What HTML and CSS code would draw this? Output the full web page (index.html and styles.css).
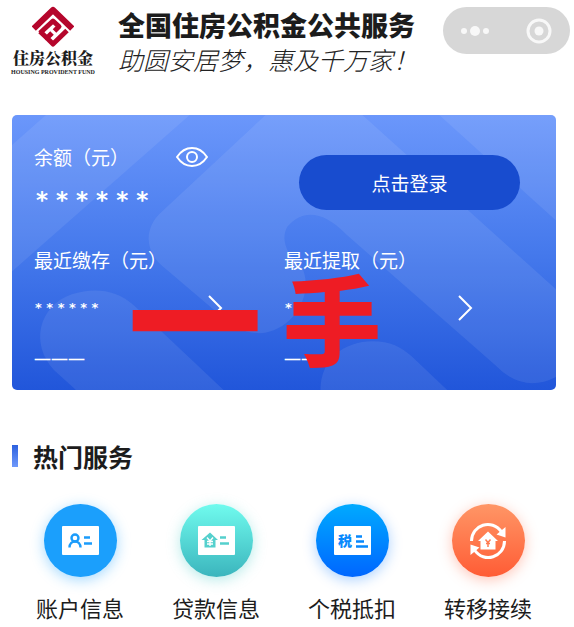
FILE: index.html
```html
<!DOCTYPE html>
<html lang="zh-CN">
<head>
<meta charset="utf-8">
<meta name="viewport" content="width=device-width, initial-scale=1">
<title>全国住房公积金公共服务</title>
<link rel="stylesheet" href="styles.css">
</head>
<body>
<header class="header">
  <div class="brand">
    <svg class="brand-mark" viewBox="0 0 42 42" aria-hidden="true">
      <g fill="none" stroke="#b5062c" stroke-width="5" stroke-linejoin="round">
        <path d="M1.800 22.500 21 4 40.200 22.500" stroke-width="6"/>
        <path d="M8 27 21 15 27 20.500 22.500 25"/>
        <path d="M8 25.500 15.500 32.500"/>
        <path d="M35 24.500 21 38 15 32 20 27"/>
      </g>
    </svg>
    <strong class="brand-name">住房公积金</strong>
    <span class="brand-latin">HOUSING PROVIDENT FUND</span>
  </div>
  <div class="titles">
    <h1 class="title">全国住房公积金公共服务</h1>
    <p class="slogan">助圆安居梦，惠及千万家！</p>
  </div>
  <div class="capsule">
    <button class="capsule-button" type="button" aria-label="更多">
      <svg width="28" height="12" viewBox="0 0 28 12" fill="#f8f8f8"><circle cx="3" cy="6" r="3"/><circle cx="14" cy="6" r="5"/><circle cx="25" cy="6" r="3"/></svg>
    </button>
    <button class="capsule-button" type="button" aria-label="关闭">
      <svg width="26" height="26" viewBox="0 0 26 26"><circle cx="13" cy="13" r="11" fill="none" stroke="#f8f8f8" stroke-width="3"/><circle cx="13" cy="13" r="4.500" fill="#f8f8f8"/></svg>
    </button>
  </div>
</header>

<main class="main">
  <section class="card">
    <svg class="card-pattern" viewBox="0 0 545 276" preserveAspectRatio="none" aria-hidden="true">
      <g fill="#fff" fill-opacity=".08">
        <path d="M34 0H178L0 157V30Z"/>
        <path d="M254 0H351L545 175V263Q512 280 484 251L335 120C310 94 290 96 276 112C270 122 272 138 290 152C304 178 282 217 249 219C233 219 222 213 211 203L150 151C132 135 133 112 150 97Z"/>
        <path d="M428 0H545V106Z"/>
        <path d="M64 276 42 256C18 230 26 192 60 180C82 173 104 175 122 191L212 276Z"/>
        <path d="M309 276C309 244 334 227 361 227C379 227 390 233 400 242L436 276Z"/>
      </g>
    </svg>
    <div class="balance">
      <div class="balance-head">
        <span class="label">余额（元）</span>
        <button class="eye" type="button" aria-label="显示余额">
          <svg width="32" height="20" viewBox="0 0 32 20" fill="none" stroke="#fff" stroke-width="2"><path d="M1 10C5 4 10 1 16 1S27 4 31 10C27 16 22 19 16 19S5 16 1 10Z"/><circle cx="16" cy="10" r="5"/></svg>
        </button>
      </div>
      <div class="amount">* * * * * *</div>
    </div>
    <div class="login-cell"><button class="login" type="button">点击登录</button></div>
    <a class="record" href="#deposit">
      <span class="label">最近缴存（元）</span>
      <span class="record-row"><span class="record-value">* * * * * *</span>
        <svg class="chevron" width="15" height="26" viewBox="0 0 15 26" fill="none" stroke="#fff" stroke-width="2"><path d="M1 1 13 13 1 25"/></svg></span>
      <span class="record-date">———</span>
    </a>
    <a class="record" href="#withdraw">
      <span class="label">最近提取（元）</span>
      <span class="record-row"><span class="record-value">* * * * * *</span>
        <svg class="chevron" width="15" height="26" viewBox="0 0 15 26" fill="none" stroke="#fff" stroke-width="2"><path d="M1 1 13 13 1 25"/></svg></span>
      <span class="record-date">———</span>
    </a>
    <div class="mark"><span class="mark-one">一</span><span class="mark-hand">手</span></div>
  </section>

  <section class="services">
    <h2 class="section-title">热门服务</h2>
    <nav class="service-grid">
      <a class="service" href="#account">
        <span class="disc disc-blue"><svg width="37" height="29" viewBox="0 0 37 29"><rect width="37" height="29" rx="1" fill="#fff"/><g fill="none" stroke="#1b9cfb" stroke-width="2.400"><circle cx="13" cy="12" r="3.500"/><path d="M7.500 21.500C7.500 17.500 10 15.500 13 15.500S18.500 17.500 18.500 21.500M22 11.500h6M22 17.500h8"/></g></svg></span>
        <span>账户信息</span>
      </a>
      <a class="service" href="#loan">
        <span class="disc disc-teal"><svg width="37" height="29" viewBox="0 0 37 29"><rect width="37" height="29" rx="1" fill="#fff"/><path d="M12 6.500 20 14H17.500V21.500H6.500V14H3.500Z" fill="#55d0cd"/><path d="M9 11.500 12 15 15 11.500M12 15V20M9 15.500H15M9 18H15" fill="none" stroke="#fff" stroke-width="1.400"/><path d="M22 11.500h6M22 17.500h9" stroke="#55d0cd" stroke-width="2.400"/></svg></span>
        <span>贷款信息</span>
      </a>
      <a class="service" href="#tax">
        <span class="disc disc-deep"><svg width="37" height="29" viewBox="0 0 37 29"><rect width="37" height="29" rx="1" fill="#fff"/><text class="tax-glyph" x="4" y="20">税</text><path d="M22 10.500h6M22 15.500h8M22 20.500h12" stroke="#0789fd" stroke-width="2.400"/></svg></span>
        <span>个税抵扣</span>
      </a>
      <a class="service" href="#transfer">
        <span class="disc disc-orange"><svg width="38" height="38" viewBox="0 0 38 38"><g fill="none" stroke="#fff" stroke-width="3"><path d="M2.500 19C2.500 3 23-4 32.500 10"/><path d="M35.500 19C35.500 35 15 42 5.500 28"/></g><path d="M36.500 5V15.500L27.500 12.500ZM1.500 33V22.500L10.500 25.500Z" fill="#fff"/><path d="M19 9.500 29 19H26.500V27.500H11.500V19H9Z" fill="#fff"/><path d="M16.500 17.500 19 20.500 21.500 17.500M19 20V25M17 21.500H21" fill="none" stroke="#ff7c52" stroke-width="1.500"/></svg></span>
        <span>转移接续</span>
      </a>
    </nav>
  </section>
</main>
</body>
</html>
```
FILE: styles.css
```css
* { box-sizing: border-box; }
body {
  margin: 0;
  background: #fff;
  color: #1c1c1c;
  font-family: "Noto Sans CJK SC", sans-serif;
}
h1, h2, p { margin: 0; }
button { border: 0; padding: 0; background: none; color: inherit; font: inherit; cursor: pointer; }
a { color: inherit; text-decoration: none; }
svg { display: block; }

.header { display: flex; align-items: flex-start; padding: 6px 4px 0 11px; }
.brand { display: flex; flex-direction: column; align-items: center; width: 84px; }
.brand-mark { width: 42px; height: 42px; }
.brand-name { font: 900 16px/20px "Noto Serif CJK SC", "Noto Sans CJK SC", serif; white-space: nowrap; }
.brand-latin { font: bold 6px/8px "Liberation Serif", serif; white-space: nowrap; }
.titles { margin-left: 23px; white-space: nowrap; }
.title { font-size: 27px; line-height: 38px; font-weight: 900; }
.slogan { font-size: 25px; line-height: 30px; font-weight: 300; font-style: italic; color: #222; }
.capsule { display: flex; align-items: center; justify-content: space-around; width: 127px; height: 47px; margin: 1px 0 0 auto; border-radius: 24px; background: #d7d7d7; }
.capsule-button { display: grid; place-items: center; height: 47px; }

.main { padding: 0 18px 0 12px; }
.card {
  position: relative;
  display: grid;
  grid-template-columns: 250px 1fr;
  margin-top: 39px;
  padding: 26px 22px 20px;
  border-radius: 5px;
  overflow: hidden;
  color: #fff;
  background: linear-gradient(#6b97fb, #4579ec 50%, #2156da);
}
.card-pattern { position: absolute; inset: 0; width: 100%; height: 100%; }
.balance, .login-cell, .record { position: relative; }
.label { font-size: 19px; line-height: 32px; }
.balance-head { display: flex; justify-content: space-between; align-items: center; padding-right: 76px; }
.amount { padding: 9px 0 0 2px; font: bold 23px/36px "DejaVu Sans", sans-serif; }
.login-cell { padding: 14px 14px 0 15px; }
.login { width: 100%; height: 55px; border-radius: 28px; background: #184ccf; font-size: 19px; }
.record { display: flex; flex-direction: column; margin-top: 26px; }
.record-row { display: flex; justify-content: space-between; align-items: center; height: 64px; padding-right: 61px; }
.record-value { padding-left: 1px; font: bold 13px/16px "DejaVu Sans", sans-serif; }
.record-date { margin-top: 6px; font: 500 17px/24px "Noto Sans", sans-serif; }
.mark { position: absolute; left: 116px; top: 132px; display: flex; align-items: center; color: #ee1c24; font-weight: 900; line-height: 136px; pointer-events: none; }
.mark-one { font-size: 134px; }
.mark-hand { margin-left: 21px; font-size: 98px; }

.services { padding-top: 48px; }
.section-title { display: flex; align-items: center; gap: 15px; font-size: 25px; line-height: 36px; font-weight: 700; }
.section-title::before { content: ""; width: 6px; height: 22px; background: linear-gradient(#2d61df, #6f99fb); }
.service-grid { display: grid; grid-template-columns: repeat(4, 1fr); margin-top: 30px; }
.service { display: flex; flex-direction: column; align-items: center; gap: 14px; font-size: 22px; line-height: 32px; }
.disc { display: grid; place-items: center; width: 73px; height: 73px; border-radius: 50%; }
.disc-blue { background: #1b9ffc; box-shadow: 0 3px 14px #1b9ffc66; }
.disc-teal { background: linear-gradient(#70fbee, #3bb5bd); box-shadow: 0 3px 14px #4accc766; }
.disc-deep { background: linear-gradient(#00aaff, #0066ff); box-shadow: 0 3px 14px #0075ff55; }
.disc-orange { background: linear-gradient(#ff9666, #ff5c35); box-shadow: 0 3px 14px #ff704d66; }
.tax-glyph { font-size: 14px; font-weight: 900; fill: #0789fd; }
```
